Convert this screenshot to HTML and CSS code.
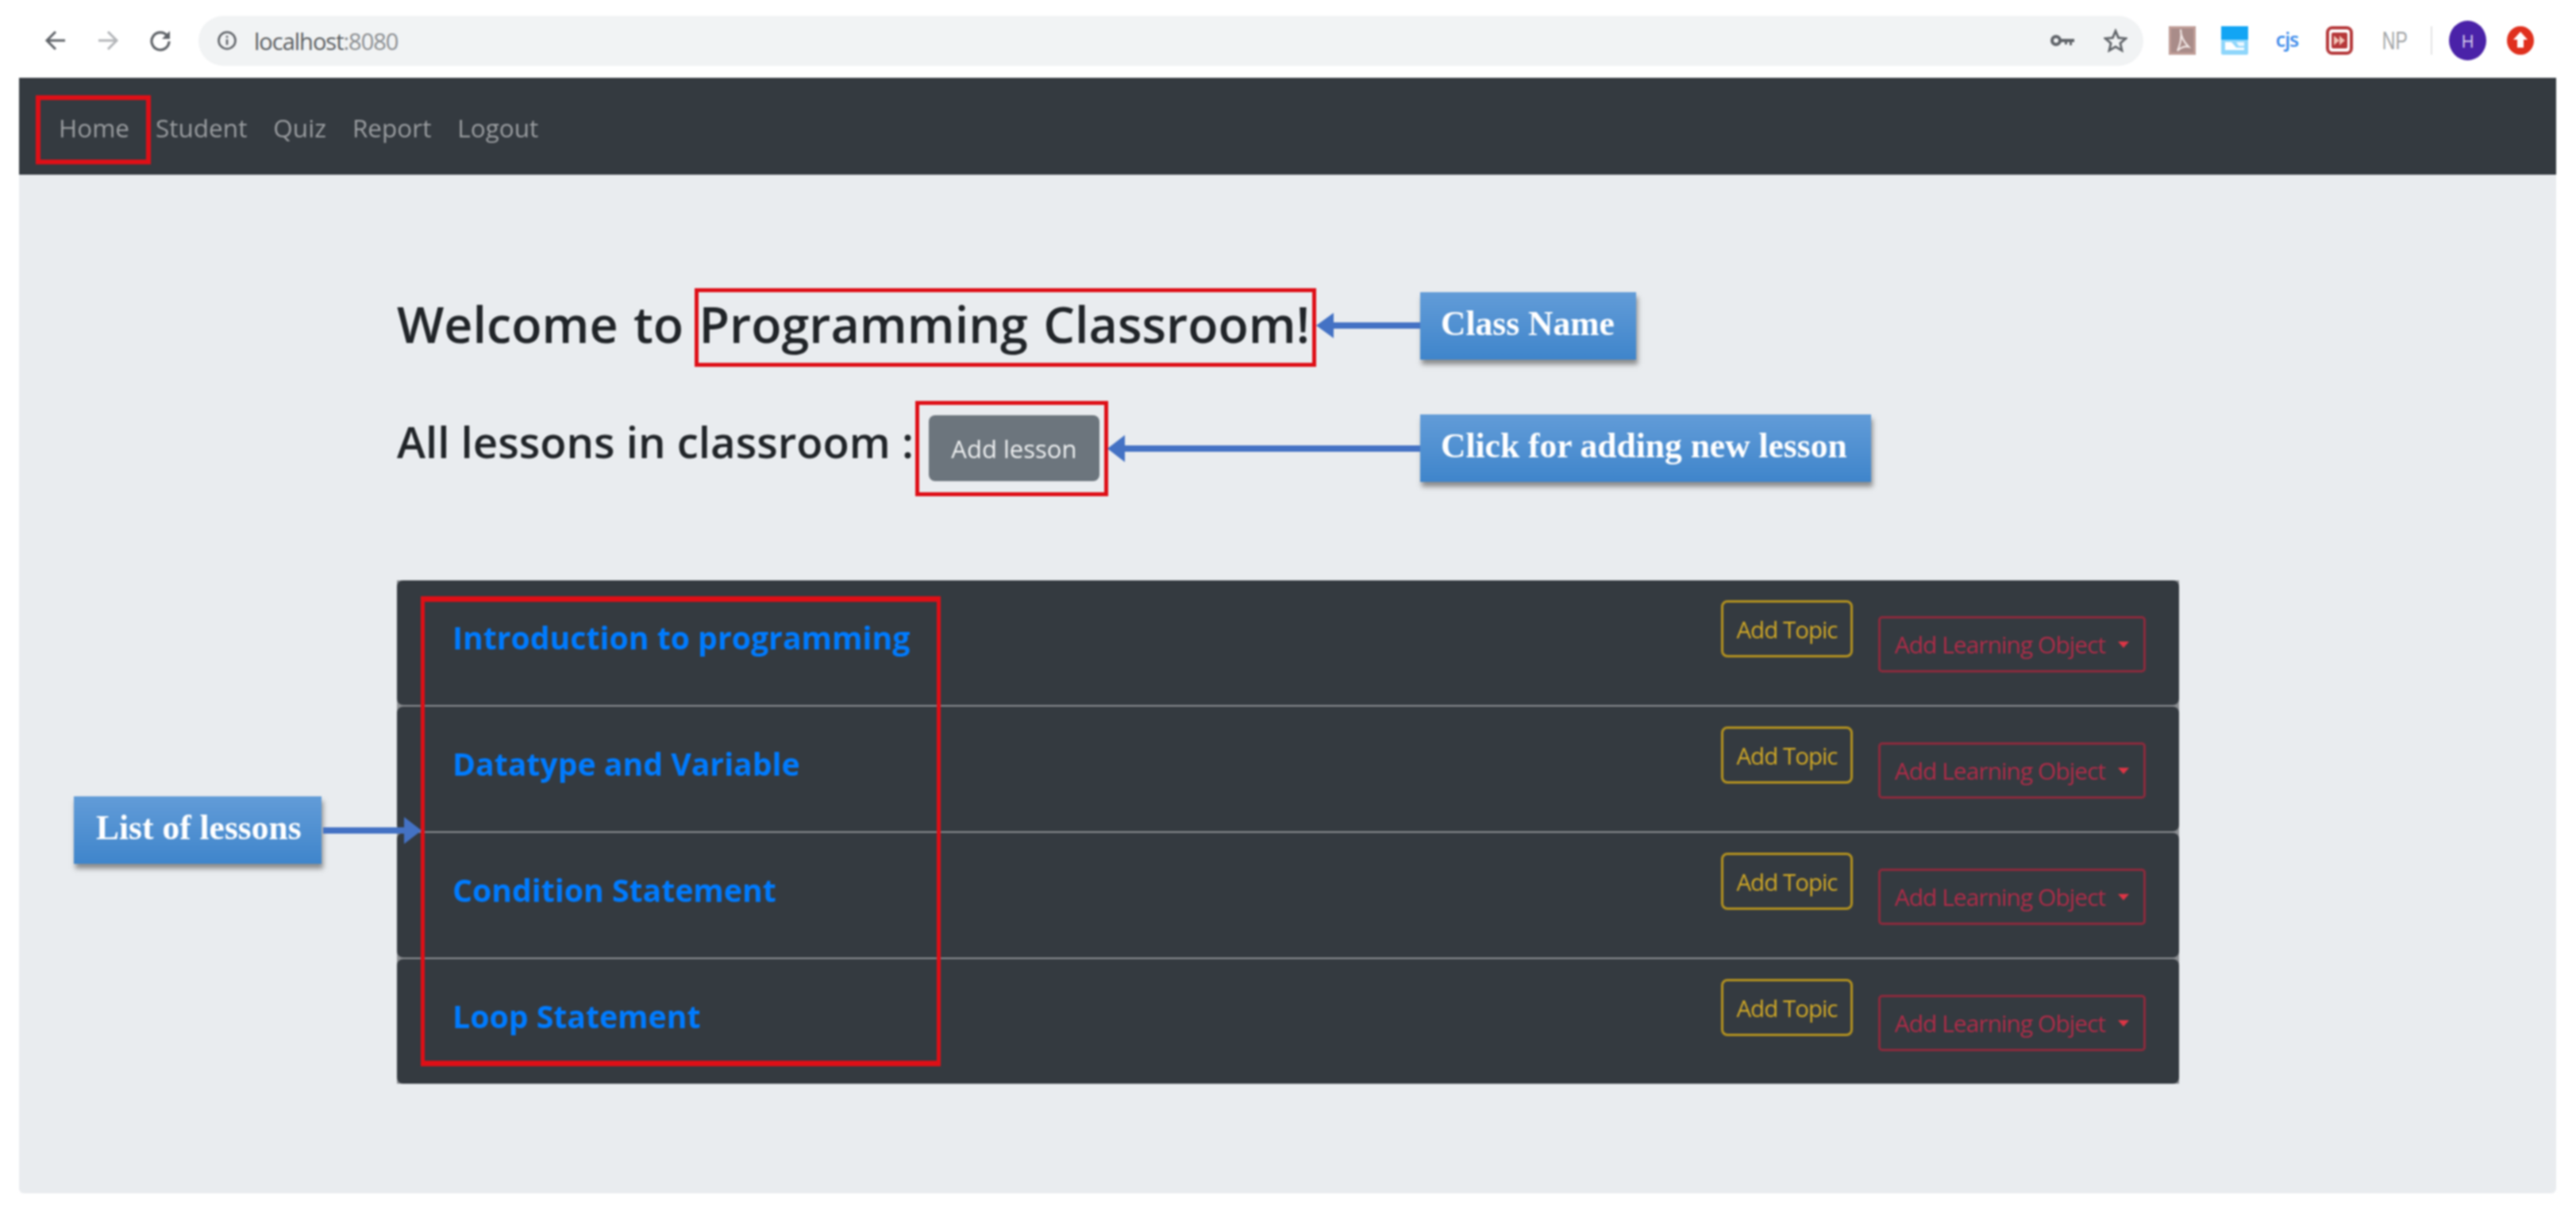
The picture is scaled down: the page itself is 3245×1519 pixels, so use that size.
FILE: index.html
```
<!DOCTYPE html>
<html lang="en">
<head>
<meta charset="utf-8">
<title>Programming Classroom</title>
<link rel="stylesheet" href="styles.css">
</head>
<body>
<div class="page">
  <header class="toolbar">
    <div class="nav-buttons">
      <svg class="tb-icon" viewBox="0 0 28 28"><path d="M26 14H4M14 3 3 14l11 11" fill="none" stroke="#5f6368" stroke-width="3"/></svg>
      <svg class="tb-icon" viewBox="0 0 28 28"><path d="M2 14h22M14 3l11 11-11 11" fill="none" stroke="#b4b6b9" stroke-width="3"/></svg>
      <svg class="tb-icon" viewBox="0 0 28 28"><path d="M23 8.5A11 11 0 1 0 25 15" fill="none" stroke="#5f6368" stroke-width="3.2"/><path d="M26 2v10H16z" fill="#5f6368"/></svg>
    </div>
    <div class="omnibox">
      <svg class="info-icon" viewBox="0 0 26 26"><circle cx="13" cy="13" r="10.5" fill="none" stroke="#5f6368" stroke-width="2.6"/><path d="M13 11.5v7M13 7v2.6" stroke="#5f6368" stroke-width="2.6"/></svg>
      <span class="url">localhost<span class="url-port">:8080</span></span>
      <span class="omni-spacer"></span>
      <svg class="key-icon" viewBox="0 0 30 16"><circle cx="7" cy="8" r="5" fill="none" stroke="#5f6368" stroke-width="4"/><path d="M12 6h18v4h-3v4h-3v-4h-3v3h-3v-3h-6z" fill="#5f6368"/></svg>
      <svg class="star-icon" viewBox="0 0 30 30"><path d="m15 3 3.6 8.6 9.4.8-7.1 6.1 2.1 9.1-8-4.8-8 4.8 2.1-9.1L2 12.4l9.4-.8z" fill="none" stroke="#5f6368" stroke-width="2.8"/></svg>
    </div>
    <div class="extensions">
      <svg class="ext" viewBox="0 0 34 36"><rect width="34" height="36" fill="#a98c89"/><rect x="1.5" y="1.5" width="31" height="33" fill="none" stroke="#c9a49d" stroke-width="2"/><path d="M15 4c0 9 3 15 10 22-5-1-9 0-14 5 3-8 6-16 4-27" fill="none" stroke="#f1e6e4" stroke-width="2.2"/></svg>
      <svg class="ext" viewBox="0 0 34 36"><rect width="34" height="36" rx="2" fill="#8fd6fb"/><rect width="34" height="17" fill="#12a5f4"/><path d="M5 30V20h8l6 7h10v3z" fill="#fff"/><path d="M19 20h10v5h-7z" fill="#eaf7ff"/></svg>
      <span class="ext ext-cjs">cjs</span>
      <svg class="ext" viewBox="0 0 34 36"><rect x="2" y="2" width="30" height="32" rx="6" fill="#fff" stroke="#b5383a" stroke-width="4"/><rect x="7" y="8" width="20" height="20" rx="2" fill="#b5383a"/><path d="M10 12l7 6-7 6zM17 12l7 6-7 6z" fill="#f2c6b8"/></svg>
      <span class="ext ext-np">NP</span>
      <span class="ext-divider"></span>
      <span class="avatar">H</span>
      <svg class="ext" viewBox="0 0 34 36"><ellipse cx="17" cy="18" rx="17" ry="18" fill="#e0301e"/><path d="M17 7l9 10h-5v10h-8V17H8z" fill="#fff"/></svg>
    </div>
  </header>

  <div class="app">
    <nav class="navbar">
      <a class="nav-link">Home</a>
      <a class="nav-link">Student</a>
      <a class="nav-link">Quiz</a>
      <a class="nav-link">Report</a>
      <a class="nav-link">Logout</a>
    </nav>
    <main class="content">
      <h1 class="welcome">Welcome to Programming Classroom!</h1>
      <div class="lesson-head">
        <h2 class="all-lessons">All lessons in classroom :</h2>
        <button class="btn-add">Add lesson</button>
      </div>
      <ul class="lessons">
        <li class="lesson">
          <a class="lesson-title">Introduction to programming</a>
          <button class="btn-topic">Add Topic</button>
          <button class="btn-object">Add Learning Object<span class="caret"></span></button>
        </li>
        <li class="lesson">
          <a class="lesson-title">Datatype and Variable</a>
          <button class="btn-topic">Add Topic</button>
          <button class="btn-object">Add Learning Object<span class="caret"></span></button>
        </li>
        <li class="lesson">
          <a class="lesson-title">Condition Statement</a>
          <button class="btn-topic">Add Topic</button>
          <button class="btn-object">Add Learning Object<span class="caret"></span></button>
        </li>
        <li class="lesson">
          <a class="lesson-title">Loop Statement</a>
          <button class="btn-topic">Add Topic</button>
          <button class="btn-object">Add Learning Object<span class="caret"></span></button>
        </li>
      </ul>
    </main>
  </div>

  <div class="mark mark-home"></div>
  <div class="mark mark-class"></div>
  <div class="mark mark-add"></div>
  <div class="mark mark-list"></div>

  <div class="callout callout-class">Class Name</div>
  <div class="callout callout-add">Click for adding new lesson</div>
  <div class="callout callout-list">List of lessons</div>

  <svg class="arrows" viewBox="0 0 3245 1519">
    <path d="M1789 406h-109v-12l-22 16 22 16v-12h109z" fill="#4472c4"/>
    <path d="M1789 561h-372v-13l-22 17 22 17v-13h372z" fill="#4472c4"/>
    <path d="M407 1042h102v-13l22 17-22 17v-13h-102z" fill="#4472c4"/>
  </svg>
</div>
</body>
</html>
```
FILE: styles.css
```
* { box-sizing: border-box; }
html, body { margin: 0; padding: 0; background: #fff; }
body { width: 3245px; height: 1519px; overflow: hidden; font-family: "Open Sans", "Noto Sans", sans-serif; }
.page { position: relative; width: 3245px; height: 1519px; filter: blur(0.9px); }

.toolbar { display: flex; align-items: center; height: 98px; padding: 8px 25px 4px 56px; background: #fff; }
.nav-buttons { display: flex; gap: 38px; width: 194px; }
.tb-icon { width: 28px; height: 28px; }
.omnibox { display: flex; align-items: center; width: 2450px; height: 63px; padding: 0 20px 0 23px; background: #f1f3f4; border-radius: 32px; }
.info-icon { width: 26px; height: 26px; margin-right: 21px; }
.url { font-size: 29px; letter-spacing: -1px; color: #5a5d60; }
.url-port { color: #8b8e91; }
.omni-spacer { flex: 1; }
.key-icon { width: 30px; height: 16px; margin-right: 37px; }
.star-icon { width: 30px; height: 30px; }
.extensions { display: flex; align-items: center; margin-left: 32px; gap: 32px; }
.ext { display: block; width: 34px; height: 36px; }
.ext-cjs { font-family: "Open Sans", sans-serif; font-weight: 600; font-size: 25px; line-height: 32px; letter-spacing: -1px; color: #3b8beb; text-align: center; }
.ext-np { font-family: "Liberation Sans", sans-serif; font-size: 32px; line-height: 36px; color: #a2a4a6; transform: scaleX(.72); }
.ext-divider { width: 2px; height: 36px; background: #e3e4e5; }
.avatar { display: flex; align-items: center; justify-content: center; width: 47px; height: 50px; margin: 0 -6px 0 -11px; border-radius: 50%; background: #4a22a8; color: #d9d3ee; font-size: 22px; }

.app { display: flex; flex-direction: column; width: 3196px; height: 1405px; margin-left: 24px; background: #e9ecef; border-radius: 0 0 6px 6px; }
.navbar { display: flex; align-items: center; gap: 33px; height: 122px; padding: 2px 0 0 50px; background: #343a40; }
.nav-link { font-size: 31.5px; color: #9a9da0; }

.content { display: flex; flex-direction: column; padding: 138px 0 0 476px; }
.welcome { margin: 0; font-size: 62.8px; line-height: 100px; font-weight: 600; word-spacing: 3px; color: #212529; }
.lesson-head { display: flex; align-items: center; gap: 19px; margin-top: 65px; }
.all-lessons { margin: 0; padding-bottom: 16px; font-size: 54.5px; line-height: 67px; font-weight: 600; color: #212529; }
.btn-add { width: 215px; height: 83px; padding: 0; border: 0; border-radius: 8px; background: #6c757d; color: #eef0f1; font: 400 31px "Open Sans", sans-serif; }

.lessons { display: flex; flex-direction: column; width: 2245px; margin: 125px 0 0; padding: 0; list-style: none; background: #8b8e92; gap: 2px; }
.lesson { display: flex; align-items: flex-start; height: 157px; padding-right: 42px; background: #343a40; border-radius: 8px; }
.lesson-title { flex: 1; margin: 42px 0 0 70px; font-size: 39.2px; line-height: 60px; font-weight: 700; color: #007bff; }
.btn-topic { width: 166px; height: 72px; margin: 25px 32px 0 0; padding: 0; background: transparent; border: 3px solid #b5931f; border-radius: 8px; color: #d0a826; font: 400 29.5px "Open Sans", sans-serif; letter-spacing: -1px; }
.btn-object { display: flex; align-items: center; justify-content: center; width: 337px; height: 71px; margin-top: 45px; padding: 0; background: transparent; border: 3px solid #8c2a3c; border-radius: 5px; color: #b02c48; font: 400 30px "Open Sans", sans-serif; letter-spacing: -1px; }
.caret { width: 0; height: 0; margin-left: 16px; border-left: 7px solid transparent; border-right: 7px solid transparent; border-top: 8px solid #dc3545; }

.mark { position: absolute; border: 5px solid #de0f17; }
.mark-home { left: 45px; top: 120px; width: 145px; height: 87px; border-width: 6px; }
.mark-class { left: 875px; top: 363px; width: 783px; height: 99px; }
.mark-add { left: 1153px; top: 505px; width: 243px; height: 120px; }
.mark-list { left: 530px; top: 751px; width: 655px; height: 592px; border-top-width: 7px; border-bottom-width: 7px; }

.callout { position: absolute; display: flex; align-items: center; padding: 0 0 8px 26px; background: linear-gradient(#629cd8, #3f85cb); box-shadow: 2px 6px 6px rgba(60, 60, 60, .55); color: #fff; font-family: "Liberation Serif", serif; font-weight: 700; font-size: 43.5px; white-space: nowrap; }
.callout-class { left: 1789px; top: 368px; width: 272px; height: 85px; }
.callout-add { left: 1789px; top: 522px; width: 568px; height: 85px; }
.callout-list { left: 93px; top: 1003px; width: 312px; height: 85px; padding-left: 28px; }

.arrows { position: absolute; left: 0; top: 0; width: 3245px; height: 1519px; pointer-events: none; }
```
